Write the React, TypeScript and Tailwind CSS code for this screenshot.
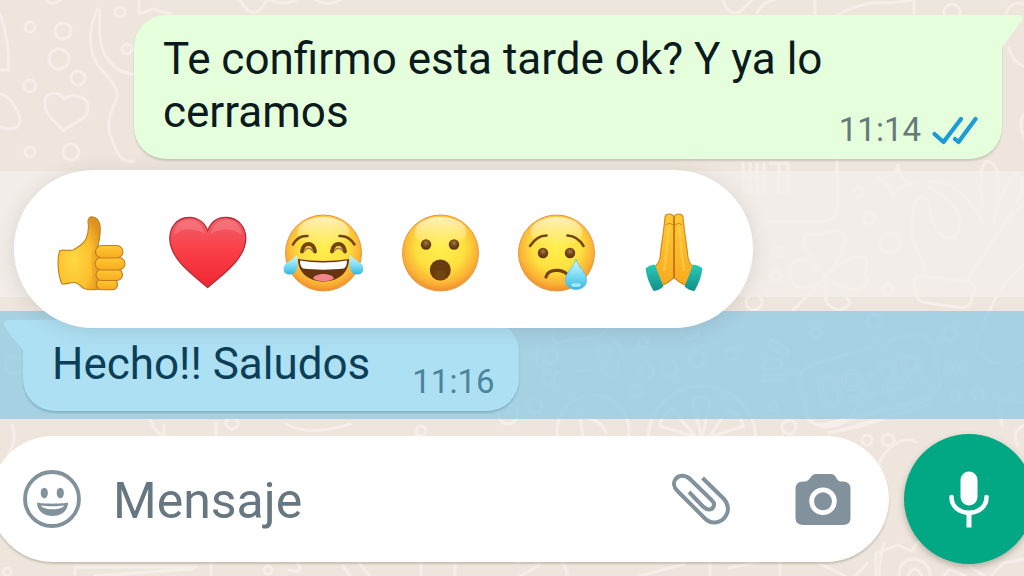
import type { ReactNode } from "react";

type Reaction = { label: string; art: ReactNode };

function EmojiDefs() {
  return (
    <svg className="absolute h-0 w-0" aria-hidden="true">
      <defs>
        <radialGradient id="face" cx="0.5" cy="0.42" r="0.58">
          <stop offset="0" stopColor="#fff04f" />
          <stop offset="0.55" stopColor="#fde03f" />
          <stop offset="0.85" stopColor="#fbb035" />
          <stop offset="1" stopColor="#f08d2c" />
        </radialGradient>
        <linearGradient id="shine" x1="0" y1="0" x2="0" y2="1">
          <stop offset="0" stopColor="#fff6d0" stopOpacity="0.85" />
          <stop offset="1" stopColor="#fff6d0" stopOpacity="0" />
        </linearGradient>
        <linearGradient id="skin" x1="0" y1="0" x2="0" y2="1">
          <stop offset="0" stopColor="#ffc935" />
          <stop offset="1" stopColor="#f7ab20" />
        </linearGradient>
        <radialGradient id="palm" cx="0.35" cy="0.6" r="0.7">
          <stop offset="0" stopColor="#ffd83f" />
          <stop offset="0.6" stopColor="#fcc02d" />
          <stop offset="1" stopColor="#dd9220" />
        </radialGradient>
        <linearGradient id="heart" x1="0" y1="0" x2="0" y2="1">
          <stop offset="0" stopColor="#f0616a" />
          <stop offset="0.45" stopColor="#fb4048" />
          <stop offset="1" stopColor="#ef2730" />
        </linearGradient>
        <linearGradient id="tear" x1="0" y1="0" x2="0" y2="1">
          <stop offset="0" stopColor="#d5f6ff" />
          <stop offset="0.55" stopColor="#7bdcf5" />
          <stop offset="1" stopColor="#35b4dc" />
        </linearGradient>
        <linearGradient id="cuff" x1="0" y1="0" x2="0" y2="1">
          <stop offset="0" stopColor="#2ccbb6" />
          <stop offset="1" stopColor="#128f8b" />
        </linearGradient>
        <radialGradient id="eye" cx="0.5" cy="0.35" r="0.6">
          <stop offset="0" stopColor="#a87c4a" />
          <stop offset="0.5" stopColor="#75491a" />
          <stop offset="1" stopColor="#5b3310" />
        </radialGradient>
      </defs>
    </svg>
  );
}

function Face({ children }: { children: ReactNode }) {
  return (
    <>
      <circle cx="40.5" cy="40" r="38" fill="url(#face)" stroke="#e9963c" strokeWidth="1" />
      <ellipse cx="40.5" cy="19" rx="26" ry="15" fill="url(#shine)" />
      {children}
    </>
  );
}

const brow = { fill: "none", stroke: "#744310", strokeWidth: 2.6, strokeLinecap: "round" as const };

const reactions: Reaction[] = [
  {
    label: "Me gusta",
    art: (
      <g stroke="#c17d1d" strokeWidth="1.1" strokeLinejoin="round">
        <path
          d="M10 37.5C14 36.5 19 38 23 37C28 34 34 31 36 26C38.5 20 39 15 38 9C38 5 40 3.5 43 4C48 5 50 10 50.2 15C50.5 22 49 29 47.5 35L52 48L50 76C44 77 38 77 34 75.5C30 73 28 69.5 24 69.5C20 69.5 15 71.5 12 71C8 63 6.500 45 10 37.5Z"
          fill="url(#palm)"
        />
        <path d="M45 37Q42 52 47 72" fill="none" stroke="#e89b26" strokeWidth="5" opacity="0.45" />
        <rect x="46.5" y="66" width="21" height="10.8" rx="5.2" fill="url(#skin)" />
        <rect x="46" y="56" width="26.5" height="11.5" rx="5.7" fill="url(#skin)" />
        <rect x="45" y="44.5" width="30" height="12.5" rx="6.2" fill="url(#skin)" />
        <rect x="45.5" y="32.5" width="27.5" height="12.5" rx="6.2" fill="url(#skin)" />
      </g>
    ),
  },
  {
    label: "Me encanta",
    art: (
      <>
        <path
          d="M40.7 17.5C37 8 29 4 21.5 4.5C10 5 2.8 14 2.8 25.5C3 46 25 61 40.7 74.5C56 61 78.5 46 78.8 25.5C78.8 14 71 5 60 4.5C52 4 44.5 8 40.7 17.5Z"
          fill="url(#heart)"
          stroke="#b32b3b"
          strokeWidth="1.3"
        />
        <path d="M7 22C8 12 14 7 22 7C31 7 36 13 38 21C27 15 15 15 7 22Z" fill="#fff" opacity="0.14" />
        <path d="M43.5 21C46 12 52 7 60 7C68 7 74 13 75 22C66 15 54 15 43.5 21Z" fill="#fff" opacity="0.14" />
      </>
    ),
  },
  {
    label: "Me divierte",
    art: (
      <Face>
        <path d="M10 31.5C13 26 18 22.5 24.5 23" {...brow} />
        <path d="M56.5 23C63 22.5 68 26 71.5 31.5" {...brow} />
        <path d="M19 38.5C20 28.5 31 28.5 32 38.5" {...brow} strokeWidth={4} />
        <path d="M49 38.5C50 28.5 61 28.5 62 38.5" {...brow} strokeWidth={4} />
        <path d="M21 38.5C23 34 28 34 30 38.5M51 38.5C53 34 58 34 60 38.5" fill="none" stroke="#a77b4b" strokeWidth="1.5" />
        <path d="M15 46C30 48.5 51 48.5 66 46C66 60 55 68.5 40.5 68.5C26 68.5 15 60 15 46Z" fill="#66340f" />
        <path d="M17 47.5C31 50 50 50 64 47.5C64 52 63 54 61 55.5C48 57 33 57 20 55.5C18 54 17 52 17 47.5Z" fill="#fff" />
        <path d="M30 65.5C32 59.5 49 59.5 51 65.5C46 69 35 69 30 65.5Z" fill="#f4848b" />
        <path d="M14 42C15 51 15.5 61 7 61.5C1 62 -1 56 2 51.5C5 48 10 46.5 14 42Z" fill="url(#tear)" />
        <path d="M67 42C66 51 65.5 61 74 61.5C80 62 82 56 79 51.5C76 48 71 46.5 67 42Z" fill="url(#tear)" />
      </Face>
    ),
  },
  {
    label: "Me asombra",
    art: (
      <Face>
        <circle cx="26" cy="31.5" r="5.2" fill="url(#eye)" />
        <circle cx="54" cy="31.5" r="5.2" fill="url(#eye)" />
        <circle cx="40.3" cy="57" r="10.5" fill="#683c0d" />
        <ellipse cx="40.3" cy="62" rx="6" ry="4.5" fill="#744410" />
      </Face>
    ),
  },
  {
    label: "Me entristece",
    art: (
      <Face>
        <path d="M14 33C18 27 23 22.5 30.5 22.5" {...brow} />
        <path d="M51.5 22.5C59 23 64 27 67.5 33" {...brow} />
        <circle cx="27" cy="40" r="5.2" fill="url(#eye)" />
        <circle cx="54" cy="40" r="5.2" fill="url(#eye)" />
        <path d="M30 64C32 55.5 46 55.5 52 62" {...brow} strokeWidth={3.2} />
        <path
          d="M60 46C62 54 70.5 59 70.5 67C70.5 73 66 76.5 60 76.5C54 76.5 49.5 73 49.5 67C49.5 59 58 54 60 46Z"
          fill="url(#tear)"
          stroke="#5cc0dc"
          strokeWidth="0.8"
        />
        <ellipse cx="60" cy="72" rx="5" ry="2" fill="#c5f5ff" opacity="0.7" />
      </Face>
    ),
  },
  {
    label: "Gracias",
    art: (
      <g strokeLinejoin="round">
        <path
          d="M41 4C39 0 33 0 32 4C30.5 22 28 33 27 45C26 51 22 53 20 57L28 72C33 72 37 68 41 64.5C45 68 49 72 54 72L62 57C60 53 56 51 55 45C54 33 51.5 22 50 4C49 0 43 0 41 4Z"
          fill="url(#skin)"
          stroke="#d58b22"
          strokeWidth="1.2"
        />
        <path d="M41 4V65" stroke="#b66d17" strokeWidth="1.6" />
        <path d="M33 12Q36 9 40 12M42 12Q46 9 49 12" fill="none" stroke="#d58b22" strokeWidth="1.2" />
        <path d="M36 14C34 32 33 45 31 58M46 14C48 32 49 45 51 58" fill="none" stroke="#ffdc62" strokeWidth="2.5" opacity="0.4" />
        <path d="M12.5 55.5Q16 52 22 51.5Q26 63 30.5 73.5Q26 77.5 20.5 78Q14 67 12.5 55.5Z" fill="url(#cuff)" />
        <path d="M69.5 55.5Q66 52 60 51.5Q56 63 51.5 73.5Q56 77.5 61.5 78Q68 67 69.5 55.5Z" fill="url(#cuff)" />
      </g>
    ),
  },
];

// x, y, radius of the loose bubbles in the doodle wallpaper
const dots = [
  [30, 27, 5], [63, 31, 8], [120, 12, 5], [127, 49, 5], [59, 59, 10], [78, 78, 7], [30, 86, 6], [30, 152, 5], [71, 152, 8],
  [952, 12, 8], [859, 192, 5], [869, 218, 6], [890, 243, 10], [778, 252, 5], [776, 276, 5], [888, 289, 5], [754, 302, 8],
  [816, 333, 5], [874, 321, 7], [950, 334, 7], [956, 368, 4], [955, 396, 5], [978, 394, 6], [773, 407, 4], [789, 427, 7],
  [867, 440, 5], [888, 440, 6], [551, 357, 7], [604, 352, 7], [643, 343, 5], [647, 371, 7], [669, 369, 8], [697, 359, 8],
  [731, 354, 6], [637, 391, 6], [690, 330, 9], [535, 406, 7], [508, 414, 10], [421, 431, 5], [232, 423, 6], [7, 572, 4],
  [268, 570, 4], [14, 365, 9],
];

function Wallpaper() {
  return (
    <svg
      className="absolute inset-0 h-full w-full"
      viewBox="0 0 1024 576"
      preserveAspectRatio="xMidYMid slice"
      fill="none"
      stroke="#f6efe9"
      strokeWidth="3"
      strokeLinecap="round"
      strokeLinejoin="round"
      aria-hidden="true"
    >
      {dots.map(([x, y, r]) => (
        <circle key={`${x}-${y}`} cx={x} cy={y} r={r} />
      ))}
      <path d="M45 102C45 92 58 90 64 99C74 92 89 97 88 108C88 120 72 123 63 131C57 121 44 117 45 102Z" />
      <path d="M0 94C10 94 22 116 20 123C17 131 8 129 0 127M0 14C6 30 9 50 9 70H0M46 0Q53 7 60 0" />
      <path d="M98 9C88 27 86 56 104 72C111 80 118 88 117 98C112 110 104 125 112 139C116 151 120 163 134 161" />
      <path d="M100 10C99 34 99 49 109 61C117 71 128 75 140 74M139 0V14L153 9L171 14" />
      <path d="M240 0Q254 25 267 0M270 0Q282 6 296 0M316 0Q328 7 340 0" />
      <path d="M723 0Q727 16 740 12L752 0M757 13Q762 2 774 0M815 0V14M837 15Q864 0 891 3L914 0V14" />
      <path d="M1006 13Q1010 1 1024 4M1009 48Q1014 64 1024 66M1023 115Q1018 126 1024 136" />
      {/* keyboard and sparkle */}
      <path d="M743 163V193H750V163M757 163V193H764V163M770 163H788V193H779V163M745 178H770" />
      <path d="M837 159V208Q836 221 822 221H773Q760 223 755 237" />
      <path d="M898 165Q900 183 915 184Q898 184 893 198Q890 183 876 177Q894 180 898 165Z" />
      {/* clover */}
      <path d="M826 277L803 245Q801 229 820 236Q844 223 846 240Q840 259 826 277Q797 247 790 269Q789 291 807 287Q823 284 826 277Q849 252 866 258Q869 269 864 273Q873 285 857 290Q838 287 826 277L793 310M826 277V301Q838 318 850 303Q845 292 826 277" />
      {/* waving hand */}
      <path d="M915 277Q919 274 951 280Q975 279 975 289L971 302Q969 309 956 307L922 302Q913 298 915 277ZM926 276Q923 260 912 237Q911 198 921 197Q929 196 932 219Q940 242 954 237Q964 225 957 211Q952 201 929 187Q922 181 937 182Q963 183 986 228" />
      <path d="M982 207Q978 171 985 162Q996 160 998 177Q999 202 994 222Q1006 174 1016 174Q1024 174 1020 196L1002 227M1024 203Q1001 226 968 279" />
      <path d="M1024 264Q1001 283 990 310Q971 346 980 354Q997 370 1024 361" />
      {/* alarm clock */}
      <path d="M812 365L909 335Q928 332 934 347L940 383Q939 394 924 398L826 424Q811 428 806 414L799 382Q799 370 812 365ZM825 425L923 402Q934 395 928 405L837 431" />
      <text
        x="871"
        y="396"
        textAnchor="middle"
        transform="rotate(-14 871 380)"
        className="font-['Liberation_Sans'] text-[44px]"
        strokeWidth="2"
      >
        09:28
      </text>
      <path d="M771 347Q767 343 772 340L789 350Q789 357 783 355ZM765 360Q760 366 765 370L780 368Q784 363 780 360ZM763 375V381H784V375Z" />
      {/* car and citrus slices */}
      <path d="M552 333L555 343L600 336L608 329M538 350Q535 365 540 367M543 362V382Q550 389 555 381V373L603 369Q611 382 617 375L620 358Q625 345 612 340" />
      <circle cx="593" cy="431" r="36" />
      <path d="M580 416Q603 420 606 433M584 445L580 416" />
      <circle cx="702" cy="440" r="54" />
      <path d="M702 438L692 400Q706 392 710 402ZM696 437L672 409Q660 416 660 426ZM709 437L728 409Q741 415 744 426Z" />
      <path d="M806 400Q803 425 825 427Q850 425 855 410M829 433Q861 427 885 418M998 400L1002 425M1000 399L1024 403" />
      <path d="M12 425Q18 440 8 455M150 420Q160 442 176 440M216 423V435M164 425V435M286 424Q310 437 350 424" />
      <path d="M1024 425Q1010 432 1018 446M884 478Q872 466 888 450Q904 435 916 442M884 543Q880 556 879 576" />
      <path d="M75 567H196M75 567V576M95 576L193 569M211 563V576M297 562Q306 575 289 570M343 566L350 576M359 563L370 576M421 563V576M455 565V576M516 562Q541 556 538 566L520 576M563 563L568 576M640 576L684 564M710 562V576M729 568L758 562M780 562V576M820 564L845 576M867 563L856 576" />
      <path d="M876 576V553L898 545L911 551L922 538M899 576Q899 559 915 559Q930 562 930 576M908 576Q914 562 922 576M944 576L950 569L966 576M991 576L1003 563L1024 559M970 567L985 576" />
    </svg>
  );
}

function ReadTicks() {
  return (
    <svg width="47" height="30" viewBox="0 0 47 30" fill="none" stroke="#1b9bd7" strokeWidth="4.2" strokeLinecap="round" strokeLinejoin="round" role="img" aria-label="Leído">
      <path d="M3.5 19L12.5 27L30 4" />
      <path d="M24 24L27.5 27L44.5 4" />
    </svg>
  );
}

function SmileIcon() {
  return (
    <svg width="58" height="58" viewBox="0 0 58 58" fill="#82929c" aria-hidden="true">
      <circle cx="29" cy="29" r="27" fill="none" stroke="#82929c" strokeWidth="3.8" />
      <ellipse cx="21.3" cy="23" rx="3.6" ry="5.2" />
      <ellipse cx="37.3" cy="23" rx="3.6" ry="5.2" />
      <path d="M14 32.500C18 34 40 34 45 32.5C45 41 38 46 29.5 46C21 46 14 41 14 32.5Z" />
      <path d="M18 35.5C24 36.5 35 36.5 41 35.5C39 40.5 20 40.5 18 35.5Z" fill="#fff" />
    </svg>
  );
}

function ClipIcon() {
  return (
    <svg width="62" height="54" viewBox="0 0 62 54" fill="none" stroke="#82929c" strokeWidth="4" aria-hidden="true">
      <path d="M32.5 6L53 26C58 31 59.5 38 56 43.5C51 52 41 52.5 35 46.5L7.5 19C3.5 15 2.8 10 6 6.5C10 2.5 16 3 20.5 7.5L42 28.5C46 32 43.5 37.5 39 37.5C36 37.5 34.5 36 32 33.5L19 20" />
    </svg>
  );
}

function CameraIcon() {
  return (
    <svg width="56" height="53" viewBox="0 0 56 53" fill="#82929c" aria-hidden="true">
      <path d="M8 8.5H10C15 8.5 15.5 1 21 1H36C41.5 1 41 8.5 46 8.5H48Q55.5 8.5 55.5 16V45Q55.5 52 48 52H8Q0.5 52 0.5 45V16Q0.5 8.5 8 8.5Z" />
      <circle cx="28" cy="28.3" r="11.4" stroke="#fff" strokeWidth="4.8" />
    </svg>
  );
}

function MicIcon() {
  return (
    <svg width="42" height="58" viewBox="0 0 42 58" fill="none" stroke="#fff" strokeWidth="4.5" aria-hidden="true">
      <rect x="12.5" y="1.5" width="17" height="34" rx="8.5" fill="#fff" stroke="none" />
      <path d="M3.5 27C3.5 48 38.5 48 38.5 27" strokeLinecap="round" />
      <path d="M21 43V57.5" strokeWidth="5" />
    </svg>
  );
}

export default function App() {
  return (
    <main className="relative flex min-h-screen flex-col overflow-hidden bg-[#eee6dd] font-[Roboto,sans-serif]">
      <EmojiDefs />
      <Wallpaper />

      {/* Sent message */}
      <section className="relative pt-[15px] pr-[22px] pb-3 pl-[134px]">
        <div className="relative flex items-end justify-between gap-2 rounded-[32px] rounded-tr-none bg-[#e5fedb] pt-[18px] pr-6 pb-[10px] pl-[29px] shadow-[0_2px_2px_rgba(90,80,60,0.22)]">
          <p className="mb-[10px] flex-1 text-[44px] leading-[53px] text-[#0b1a1c]">Te confirmo esta tarde ok? Y ya lo cerramos</p>
          <div className="flex items-center gap-[10px]">
            <time className="text-[33px] leading-[38px] text-[#667a78]">11:14</time>
            <ReadTicks />
          </div>
          <svg className="absolute top-0 left-full" width="22" height="34" viewBox="0 0 22 34" fill="#e5fedb" aria-hidden="true">
            <path d="M0 0H17Q23 1 19 7L0 32Z" />
          </svg>
        </div>
      </section>

      {/* Reactions */}
      <section className="relative z-10 mb-[14px] h-[126px] bg-[#f3efeb]/75">
        <div className="absolute -top-px left-[14px] flex h-[158px] w-[739px] items-center justify-between rounded-full bg-white pt-2 pr-10 pl-9 shadow-[0_3px_20px_rgba(60,50,40,0.13)]">
          {reactions.map((r) => (
            <button key={r.label} type="button" aria-label={r.label} className="cursor-pointer">
              <svg width="80" height="80" viewBox="0 0 80 80" className="overflow-visible" fill="none" aria-hidden="true">
                {r.art}
              </svg>
            </button>
          ))}
        </div>
      </section>

      {/* Selected message */}
      <section className="relative bg-[#88c7e5]/70 pt-[9px] pb-2 pl-[23px]">
        <div className="relative flex w-fit items-end gap-[42px] rounded-[32px] rounded-tl-none bg-[#aee0f4] pt-[18px] pr-6 pb-[10px] pl-[29px] shadow-[0_2px_2px_rgba(30,90,120,0.25)]">
          <p className="mb-[10px] text-[44px] leading-[53px] text-[#0b3f58]">Hecho!! Saludos</p>
          <time className="text-[33px] leading-[38px] text-[#4c849b]">11:16</time>
          <svg className="absolute top-0 right-full" width="20" height="32" viewBox="0 0 20 32" fill="#aee0f4" aria-hidden="true">
            <path d="M20 0H5Q-1 1 2 7Q4 11 20 30Z" />
          </svg>
        </div>
      </section>

      {/* Composer */}
      <section className="relative -mx-[10px] flex items-center gap-[15px] pt-[15px] pb-3">
        <div className="flex h-[126px] min-w-0 flex-1 items-center rounded-full bg-white pr-[38px] pl-[33px] shadow-[0_2px_2px_rgba(90,80,60,0.25)]">
          <button type="button" aria-label="Emojis" className="cursor-pointer">
            <SmileIcon />
          </button>
          <input
            type="text"
            aria-label="Mensaje"
            placeholder="Mensaje"
            className="ml-8 min-w-0 flex-1 pt-1 text-[50px] leading-[60px] text-[#0b1a1c] outline-none placeholder:text-[#667781]"
          />
          <button type="button" aria-label="Adjuntar" className="cursor-pointer">
            <ClipIcon />
          </button>
          <button type="button" aria-label="Cámara" className="ml-[63px] cursor-pointer">
            <CameraIcon />
          </button>
        </div>
        <button
          type="button"
          aria-label="Grabar audio"
          className="flex size-[130px] shrink-0 cursor-pointer items-center justify-center rounded-full bg-[#02a884] shadow-[0_3px_6px_rgba(60,50,40,0.3)]"
        >
          <MicIcon />
        </button>
      </section>
    </main>
  );
}
